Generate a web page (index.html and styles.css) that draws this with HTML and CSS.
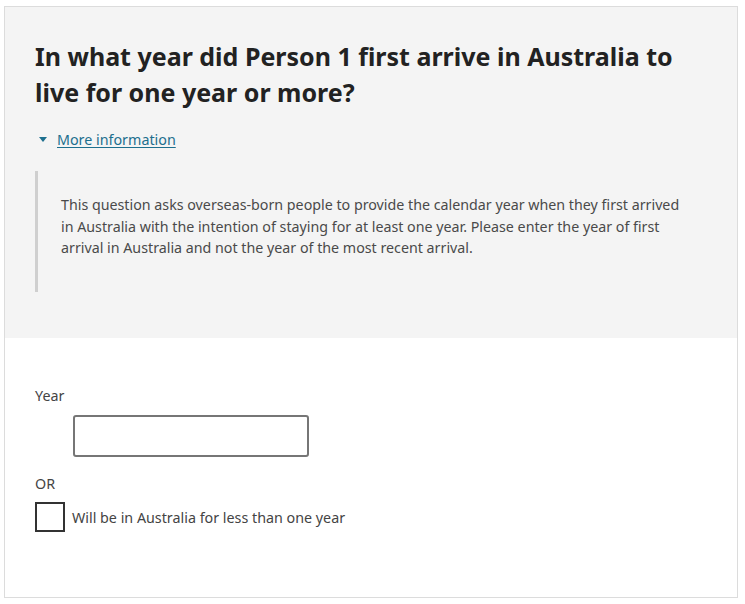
FILE: index.html
```html
<!DOCTYPE html>
<html lang="en">
<head>
<meta charset="utf-8">
<title>Year of arrival</title>
<link rel="stylesheet" href="styles.css">
</head>
<body>
<div class="card">
  <section class="question">
    <h1 class="title">In what year did Person 1 first arrive in Australia to live for one year or more?</h1>
    <div class="more">
      <span class="caret"></span>
      <a class="more-link" href="#">More information</a>
    </div>
    <div class="info">
      <p>This question asks overseas-born people to provide the calendar year when they first arrived in Australia with the intention of staying for at least one year. Please enter the year of first arrival in Australia and not the year of the most recent arrival.</p>
    </div>
  </section>
  <section class="answer">
    <label class="label" for="year">Year</label>
    <input class="year-input" id="year" type="text">
    <div class="or">OR</div>
    <label class="check-row">
      <span class="checkbox"></span>
      <span class="check-label">Will be in Australia for less than one year</span>
    </label>
  </section>
</div>
</body>
</html>
```

FILE: styles.css
```css
html, body {
  margin: 0;
  padding: 0;
  background: #ffffff;
}
body {
  padding: 6px 7px 6px 4px;
  font-family: "Noto Sans", "Open Sans", sans-serif;
  color: #444;
}
.card {
  border: 1px solid #dcdcdc;
  background: #fff;
  height: 592px;
  box-sizing: border-box;
  display: flex;
  flex-direction: column;
}
.question {
  background: #f4f4f4;
  padding: 31px 30px 46px 30px;
}
.title {
  margin: 0;
  font-size: 25px;
  line-height: 36px;
  font-weight: 700;
  color: #222;
  max-width: 650px;
}
.more {
  margin-top: 19px;
  display: flex;
  align-items: center;
  height: 21px;
  font-size: 14.3px;
}
.caret {
  width: 0;
  height: 0;
  border-left: 4px solid transparent;
  border-right: 4px solid transparent;
  border-top: 5px solid #1d6f8e;
  margin-left: 4px;
  margin-right: 10px;
}
.more-link {
  color: #1d6f8e;
  text-decoration: underline;
  text-underline-offset: 2px;
}
.info {
  margin-top: 21px;
  border-left: 3px solid #cfcfcf;
  padding: 23px 20px 33px 23px;
  height: 121px;
  box-sizing: border-box;
}
.info p {
  margin: 0;
  font-size: 14.25px;
  line-height: 21.5px;
  color: #4a4a4a;
}
.answer {
  padding: 47px 30px 0 30px;
  display: flex;
  flex-direction: column;
  align-items: flex-start;
  font-size: 14.3px;
  line-height: 21px;
  color: #444;
}
.label {
  display: block;
}
.year-input {
  margin: 9px 0 0 38px;
  width: 236px;
  height: 42px;
  box-sizing: border-box;
  border: 2px solid #767676;
  border-radius: 3px;
  background: #fff;
  font-size: 14px;
}
.or {
  margin-top: 16px;
}
.check-row {
  margin-top: 8px;
  display: flex;
  align-items: center;
  gap: 7px;
}
.checkbox {
  width: 30px;
  height: 30px;
  box-sizing: border-box;
  border: 2px solid #333;
  background: #fff;
}
.check-label {
  color: #444;
}
```
